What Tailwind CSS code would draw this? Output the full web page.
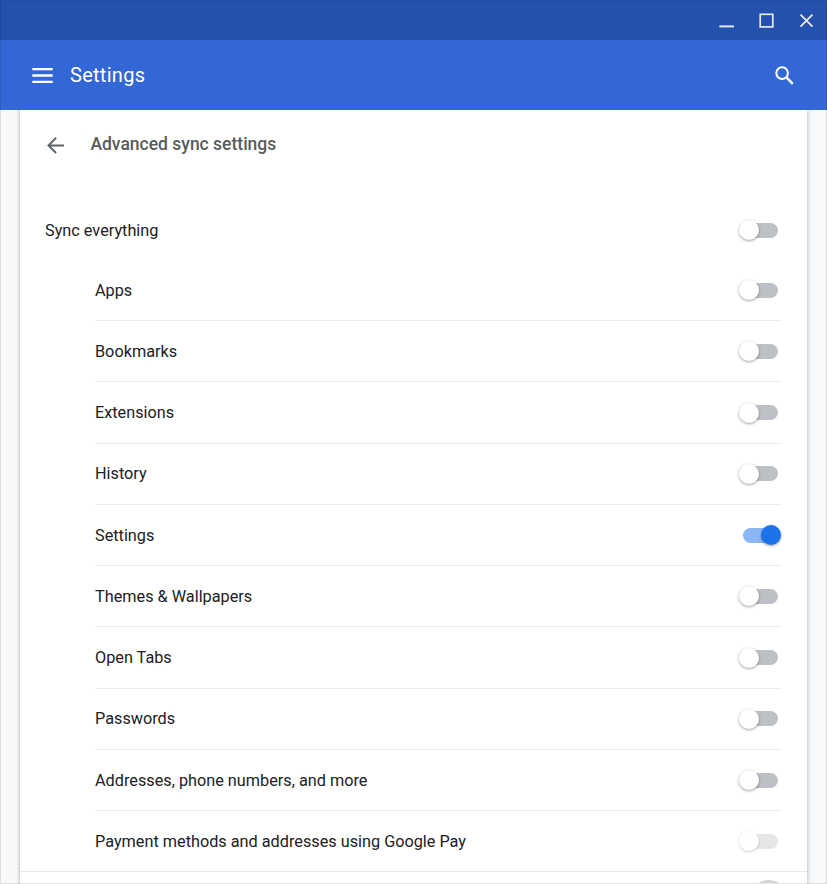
<!DOCTYPE html>
<html lang="en">
<head>
<meta charset="utf-8">
<title>Settings</title>
<script src="https://cdn.jsdelivr.net/npm/@tailwindcss/browser@4"></script>
</head>
<body class="bg-[#f7f9fb] font-[Roboto,sans-serif] text-[#202124]">
<div class="relative flex h-[884px] w-[827px] flex-col overflow-hidden">
  <header class="relative z-10 shrink-0 text-white">
    <div class="flex h-10 items-center justify-end bg-[#2450ae] pr-[13px]">
      <svg width="95" height="16" viewBox="0 0 95 16" fill="none" stroke="#e4e7ec">
        <path d="M.3 14.4H15" stroke-width="2"/>
        <rect x="41.2" y="2.3" width="12.6" height="12.6" stroke-width="1.7"/>
        <path d="M81.5 2.6l12 12M93.5 2.6l-12 12" stroke-width="1.8"/>
      </svg>
    </div>
    <div class="flex h-[70px] items-center bg-[#3367d6] pl-8 pr-[33px]">
      <svg width="21" height="16" viewBox="0 0 21 16" fill="none" stroke="white" stroke-width="2.3"><path d="M.3 2.1H20.7M.3 8.5H20.7M.3 14.8H20.7"/></svg>
      <h1 class="ml-[17px] text-[20px] leading-6 tracking-[0.28px]">Settings</h1>
      <svg class="ml-auto" width="19" height="19" viewBox="0 0 19 19" fill="none" stroke="white"><circle cx="7.1" cy="7.1" r="5.8" stroke-width="2"/><path d="M11.4 11.4l6.4 6.4" stroke-width="2.4"/></svg>
    </div>
  </header>
  <main class="mx-5 flex min-h-0 flex-1 flex-col bg-white shadow-[0_1px_4px_rgba(60,64,67,0.45)]">
    <div class="flex h-[69px] shrink-0 items-center pl-[27px]">
      <svg class="mt-px" width="18" height="18" viewBox="0 0 18 18" fill="none" stroke="#5f6368" stroke-width="2"><path d="M17 9.4H1.8M9.1 1.8L1.5 9.4l7.6 7.6"/></svg>
      <h2 class="-mt-0.5 ml-[25.4px] text-[17.5px] font-medium leading-6 text-[#5a5a5a]">Advanced sync settings</h2>
    </div>
    <div class="mt-[21px] flex h-[60px] shrink-0 items-center justify-between pl-[25px] pr-[25px] text-[16.26px]">
      <span class="pt-[2px]">Sync everything</span>
      <span class="toggle"></span>
    </div>
    <ul id="rows" class="shrink-0 pl-[75px] pr-[25px] text-[16.26px]"></ul>
    <div class="relative h-3 shrink-0 overflow-hidden border-t border-[#e6e7e8]">
      <div class="absolute left-[729px] top-[8px] size-10 rounded-full bg-[#d5d6d7]"></div>
    </div>
  </main>
  <div class="pointer-events-none absolute inset-0 z-20 border border-black/10 border-t-black/5"></div>
</div>
<script>
const knob = 'absolute top-[-2.5px] size-[20px] rounded-full ';
function toggle(state) {
  const track = { off: 'bg-[#bdc1c6]', on: 'bg-[#8cb7f7]', disabled: 'bg-[#e5e6e8]' }[state];
  const dot = {
    off: 'left-[-4px] bg-white shadow-[0_1px_3px_rgba(0,0,0,0.38)]',
    on: 'left-[18.4px] bg-[#1a73e8] shadow-[0_1px_3px_rgba(0,0,0,0.38)]',
    disabled: 'left-[-4px] bg-white shadow-[0_1px_3px_rgba(0,0,0,0.18)]'
  }[state];
  return `<span class="relative mr-1 block h-[15px] w-[35px] rounded-full ${track}"><span class="${knob}${dot}"></span></span>`;
}
document.querySelector('.toggle').innerHTML = toggle('off');
const items = ['Apps', 'Bookmarks', 'Extensions', 'History', 'Settings', 'Themes &amp; Wallpapers', 'Open Tabs', 'Passwords', 'Addresses, phone numbers, and more', 'Payment methods and addresses using Google Pay'];
document.getElementById('rows').innerHTML = items.map((t, i) => {
  const last = i === items.length - 1;
  const size = last ? 'h-[60.2px]' : i ? 'h-[61.24px] border-b' : 'h-[61.15px] border-b';
  return `<li class="flex items-center justify-between border-[#ececed] ${size}"><span class="pt-[1.75px]">${t}</span><span class="pt-[0.4px]">${toggle(last ? 'disabled' : i === 4 ? 'on' : 'off')}</span></li>`;
}).join('');
</script>
</body>
</html>
